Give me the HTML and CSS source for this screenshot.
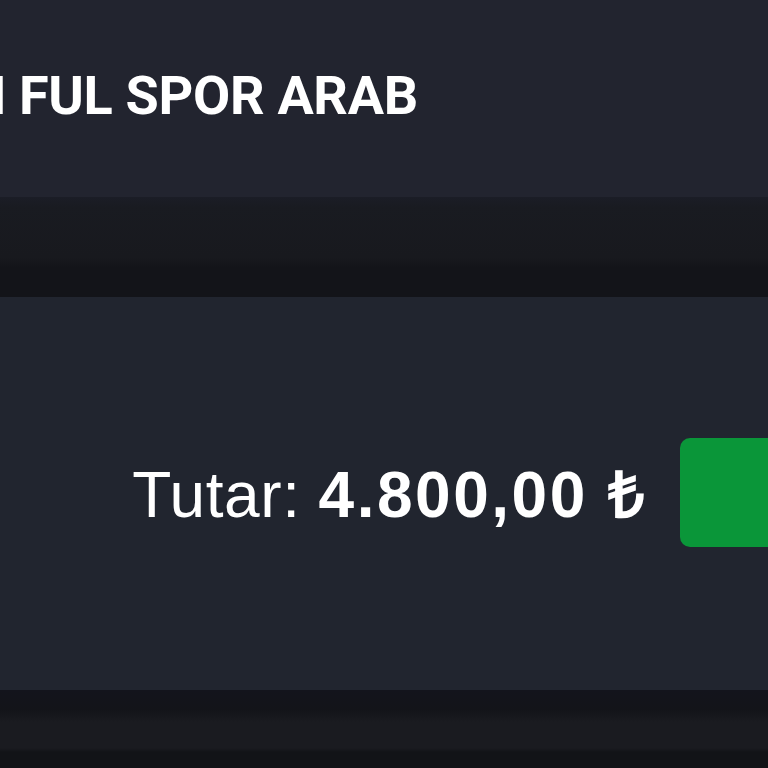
FILE: index.html
```html
<!DOCTYPE html>
<html lang="tr">
<head>
    <meta charset="UTF-8">
    <meta name="viewport" content="width=device-width, initial-scale=1.0">
    <title>Sepet</title>
    <link rel="stylesheet" href="styles.css">
</head>
<body>
    <div class="product-head">
        <h2 class="product-title">N FUL SPOR ARAB</h2>
    </div>

    <div class="divider"></div>

    <div class="summary">
        <div class="total">
            <span class="total-label">Tutar:</span>
            <span class="total-amount">4.800,00 ₺</span>
        </div>
        <button class="checkout-btn" type="button"></button>
    </div>

    <div class="footer-strip"></div>
</body>
</html>
```

FILE: styles.css
```css
* {
    margin: 0;
    padding: 0;
    box-sizing: border-box;
}

body {
    font-family: 'Roboto', 'Liberation Sans', sans-serif;
    background: #121317;
    color: #ffffff;
    width: 768px;
    height: 768px;
    overflow: hidden;
}

.product-head {
    height: 197px;
    background: #22242f;
    display: flex;
    align-items: center;
    padding-bottom: 6px;
}

.product-title {
    font-size: 54px;
    font-weight: 700;
    margin-left: -32px;
    white-space: nowrap;
    letter-spacing: -0.3px;
}

/* dark band between header and summary */
.divider {
    height: 100px;
    background: linear-gradient(180deg,
        #1b1d26 0px,
        #191b21 10px,
        #18191e 60px,
        #131419 70px,
        #131419 100px);
}

.summary {
    height: 393px;
    background: #21252f;
    display: flex;
    align-items: center;
    justify-content: flex-end;
    gap: 35px;
    margin-right: -120px;
}

.total {
    font-family: 'Liberation Sans', Arial, sans-serif;
    font-size: 64px;
    white-space: nowrap;
    display: flex;
    gap: 18px;
    align-items: baseline;
    margin-top: -2px;
}

.total-label {
    font-weight: 400;
    letter-spacing: 0.6px;
}

.total-amount {
    font-weight: 700;
    letter-spacing: 2.5px;
    margin-right: -2.5px;
}

.checkout-btn {
    width: 208px;
    height: 109px;
    background: #0a9639;
    border: none;
    border-radius: 10px;
    margin-top: -3px;
}

.footer-strip {
    height: 78px;
    background: linear-gradient(180deg,
        #13141c 0px,
        #131419 20px,
        #1a1b20 32px,
        #1a1b20 58px,
        #121317 62px);
}
```
